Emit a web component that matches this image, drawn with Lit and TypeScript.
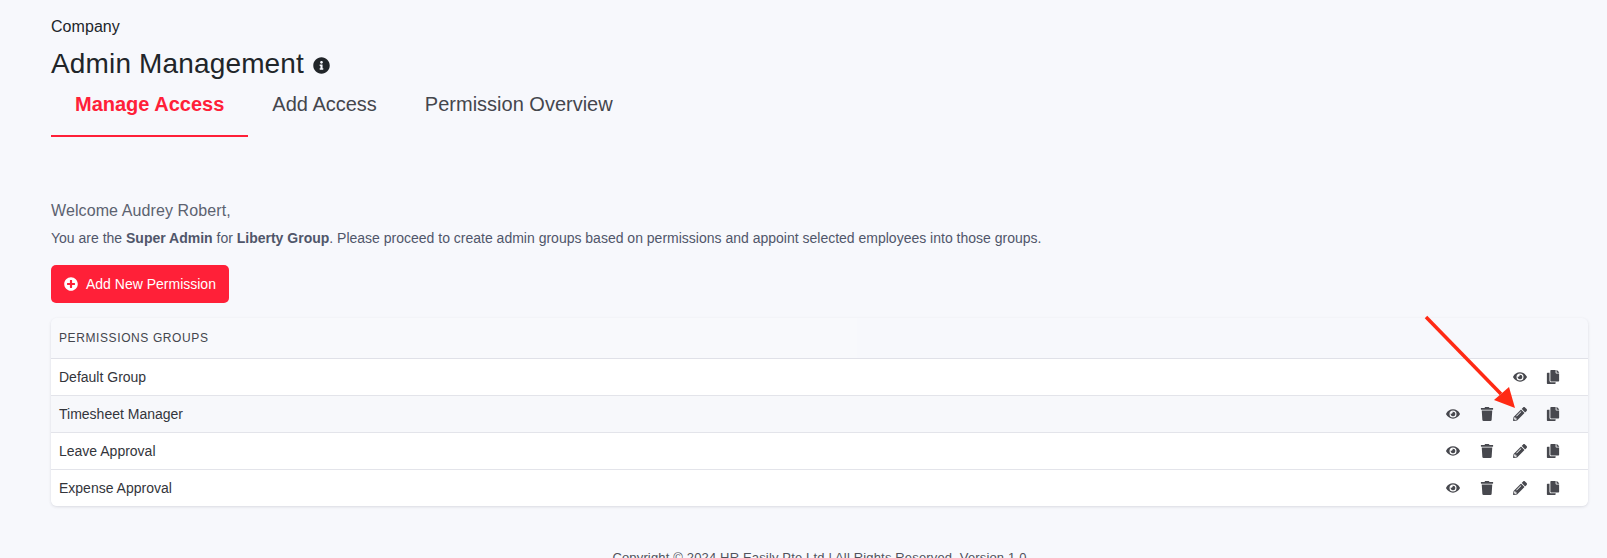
import { LitElement, html, css, svg } from "lit";
import { customElement } from "lit/decorators.js";

const ICONS = {
  eye: {
    box: "0 0 576 512",
    d: "M572.52 241.4C518.29 135.59 410.93 64 288 64S57.68 135.64 3.48 241.41a32.35 32.35 0 0 0 0 29.19C57.71 376.41 165.07 448 288 448s230.32-71.64 284.52-177.41a32.35 32.35 0 0 0 0-29.19zM288 400a144 144 0 1 1 144-144 143.93 143.93 0 0 1-144 144zm0-240a95.31 95.31 0 0 0-25.31 3.79 47.85 47.85 0 0 1-66.9 66.9A95.78 95.78 0 1 0 288 160z",
  },
  trash: {
    box: "0 0 448 512",
    d: "M432 32H312l-9.4-18.7A24 24 0 0 0 281.1 0H166.8a23.72 23.72 0 0 0-21.4 13.3L136 32H16A16 16 0 0 0 0 48v32a16 16 0 0 0 16 16h416a16 16 0 0 0 16-16V48a16 16 0 0 0-16-16zM53.2 467a48 48 0 0 0 47.9 45h245.8a48 48 0 0 0 47.9-45L416 128H32z",
  },
  pencil: {
    box: "0 0 512 512",
    d: "M497.9 142.1l-46.1 46.1c-4.7 4.7-12.3 4.7-17 0l-111-111c-4.7-4.7-4.7-12.3 0-17l46.1-46.1c18.7-18.7 49.1-18.7 67.9 0l60.1 60.1c18.8 18.7 18.8 49.1 0 67.9zM284.2 99.8L21.6 362.4.4 483.9c-2.9 16.4 11.4 30.6 27.8 27.8l121.5-21.3 262.6-262.6c4.7-4.7 4.7-12.3 0-17l-111-111c-4.8-4.7-12.4-4.7-17.1 0zM124.1 339.9c-5.5-5.5-5.5-14.3 0-19.8l154-154c5.5-5.5 14.3-5.5 19.8 0s5.5 14.3 0 19.8l-154 154c-5.5 5.5-14.3 5.5-19.8 0zM88 424h48v36.3l-64.5 11.3-31.1-31.1L51.7 376H88v48z",
  },
  copy: {
    box: "0 0 448 512",
    d: "M320 448v40c0 13.255-10.745 24-24 24H24c-13.255 0-24-10.745-24-24V120c0-13.255 10.745-24 24-24h72v296c0 30.879 25.121 56 56 56h168zm0-344V0H152c-13.255 0-24 10.745-24 24v368c0 13.255 10.745 24 24 24h272c13.255 0 24-10.745 24-24V128H344c-13.2 0-24-10.8-24-24zm120.971-31.029L375.029 7.029A24 24 0 0 0 358.059 0H352v96h96v-6.059a24 24 0 0 0-7.029-16.97z",
  },
  info: {
    box: "0 0 512 512",
    d: "M256 8C119.043 8 8 119.083 8 256c0 136.997 111.043 248 248 248s248-111.003 248-248C504 119.083 392.957 8 256 8zm0 110c23.196 0 42 18.804 42 42s-18.804 42-42 42-42-18.804-42-42 18.804-42 42-42zm56 254c0 6.627-5.373 12-12 12h-88c-6.627 0-12-5.373-12-12v-24c0-6.627 5.373-12 12-12h12v-64h-12c-6.627 0-12-5.373-12-12v-24c0-6.627 5.373-12 12-12h64c6.627 0 12 5.373 12 12v100h12c6.627 0 12 5.373 12 12v24z",
  },
  plus: {
    box: "0 0 512 512",
    d: "M256 8C119 8 8 119 8 256s111 248 248 248 248-111 248-248S393 8 256 8zm144 276c0 6.6-5.4 12-12 12h-92v92c0 6.6-5.4 12-12 12h-56c-6.6 0-12-5.4-12-12v-92h-92c-6.6 0-12-5.4-12-12v-56c0-6.6 5.4-12 12-12h92v-92c0-6.6 5.4-12 12-12h56c6.6 0 12 5.4 12 12v92h92c6.6 0 12 5.4 12 12v56z",
  },
};

type IconName = keyof typeof ICONS;

function icon(name: IconName, cls = "") {
  const i = ICONS[name];
  return html`<svg class="icon ${cls}" viewBox=${i.box} fill="currentColor">${svg`<path d=${i.d}></path>`}</svg>`;
}

const GROUPS = [
  { name: "Default Group", locked: true, hover: false },
  { name: "Timesheet Manager", locked: false, hover: true },
  { name: "Leave Approval", locked: false, hover: false },
  { name: "Expense Approval", locked: false, hover: false },
];

@customElement("app-root")
export class AppRoot extends LitElement {
  static styles = css`
    :host {
      display: block;
      position: relative;
      height: 558px;
      overflow: hidden;
      background: #f7f8fc;
      font-family: "Liberation Sans", Arial, sans-serif;
      color: #212529;
    }
    .page {
      padding: 17px 19px 0 51px;
    }
    .crumb {
      font-size: 16px;
      line-height: 20px;
      letter-spacing: 0.05px;
      color: #212529;
    }
    h1 {
      display: flex;
      align-items: center;
      gap: 9px;
      margin: 11px 0 0;
      font-size: 28px;
      font-weight: 400;
      line-height: 32px;
      letter-spacing: 0.15px;
    }
    h1 .icon {
      width: 17px;
      height: 17px;
      margin-top: 3px;
    }
    .tabs {
      display: flex;
      margin-top: -3px;
    }
    .tab {
      padding: 15px 24px 19px;
      font-size: 20px;
      line-height: 24px;
      color: #44464d;
      border-bottom: 2px solid transparent;
    }
    .tab.active {
      color: #ff2038;
      font-weight: 700;
      border-bottom-color: #ff2038;
    }
    .welcome {
      margin: 64px 0 0;
      font-size: 16px;
      line-height: 20px;
      letter-spacing: 0.1px;
      color: #5c6270;
    }
    .intro {
      margin: 8px 0 0;
      font-size: 14px;
      line-height: 18px;
      color: #50566a;
    }
    .btn {
      display: inline-flex;
      align-items: center;
      gap: 8px;
      margin-top: 18px;
      height: 38px;
      padding: 0 13px;
      box-sizing: border-box;
      border: 0;
      border-radius: 5px;
      background: #ff2038;
      color: #fff;
      font: 14px "Liberation Sans", Arial, sans-serif;
    }
    .btn .icon {
      width: 14px;
      height: 14px;
    }
    .card {
      margin-top: 15px;
      border-radius: 6px;
      box-shadow: 0 1px 3px rgba(60, 64, 80, 0.16);
      overflow: hidden;
    }
    .head {
      display: flex;
      height: 41px;
      border-bottom: 1px solid #e0e1e8;
      box-sizing: border-box;
    }
    .head div {
      width: 798px;
      padding-left: 8px;
      background: #f8f9fc;
      font-size: 12px;
      line-height: 40px;
      letter-spacing: 0.6px;
      color: #44464d;
    }
    .row {
      display: flex;
      align-items: center;
      justify-content: space-between;
      height: 37px;
      padding: 0 18px 0 8px;
      box-sizing: border-box;
      border-bottom: 1px solid #e3e4ea;
      background: #fff;
      font-size: 14px;
      color: #33353b;
    }
    .row.hover {
      background: #f7f8fb;
    }
    .row:last-child {
      border-bottom: 0;
      height: 36px;
    }
    .actions {
      display: flex;
      color: #47484e;
    }
    .slot {
      display: flex;
      justify-content: center;
      width: 33.3px;
    }
    .row .icon {
      width: 14px;
      height: 14px;
    }
    .footer {
      margin-top: 44px;
      text-align: center;
      font-size: 13px;
      line-height: 16px;
      letter-spacing: 0.16px;
      color: #50535c;
    }
    .arrow {
      position: absolute;
      left: 0;
      top: 0;
      pointer-events: none;
    }
  `;

  renderRow(group: { name: string; locked: boolean; hover: boolean }) {
    const names: IconName[] = group.locked ? ["eye", "copy"] : ["eye", "trash", "pencil", "copy"];
    return html`
      <div class="row ${group.hover ? "hover" : ""}">
        <span>${group.name}</span>
        <span class="actions">${names.map((n) => html`<span class="slot">${icon(n)}</span>`)}</span>
      </div>
    `;
  }

  render() {
    return html`
      <div class="page">
        <div class="crumb">Company</div>
        <h1>Admin Management ${icon("info")}</h1>
        <div class="tabs">
          <div class="tab active">Manage Access</div>
          <div class="tab">Add Access</div>
          <div class="tab">Permission Overview</div>
        </div>
        <p class="welcome">Welcome Audrey Robert,</p>
        <p class="intro">
          You are the <b>Super Admin</b> for <b>Liberty Group</b>. Please proceed to create admin groups based on
          permissions and appoint selected employees into those groups.
        </p>
        <button class="btn">${icon("plus")}Add New Permission</button>
        <div class="card">
          <div class="head"><div>PERMISSIONS GROUPS</div></div>
          ${GROUPS.map((g) => this.renderRow(g))}
        </div>
        <div class="footer">Copyright © 2024 HR Easily Pte Ltd | All Rights Reserved. Version 1.0</div>
      </div>
      <svg class="arrow" width="1607" height="558">
        <line x1="1426" y1="317" x2="1501" y2="394" stroke="#ff2a14" stroke-width="3.5"></line>
        <polygon points="1515,408 1494,400 1509,387" fill="#ff2a14"></polygon>
      </svg>
    `;
  }
}
